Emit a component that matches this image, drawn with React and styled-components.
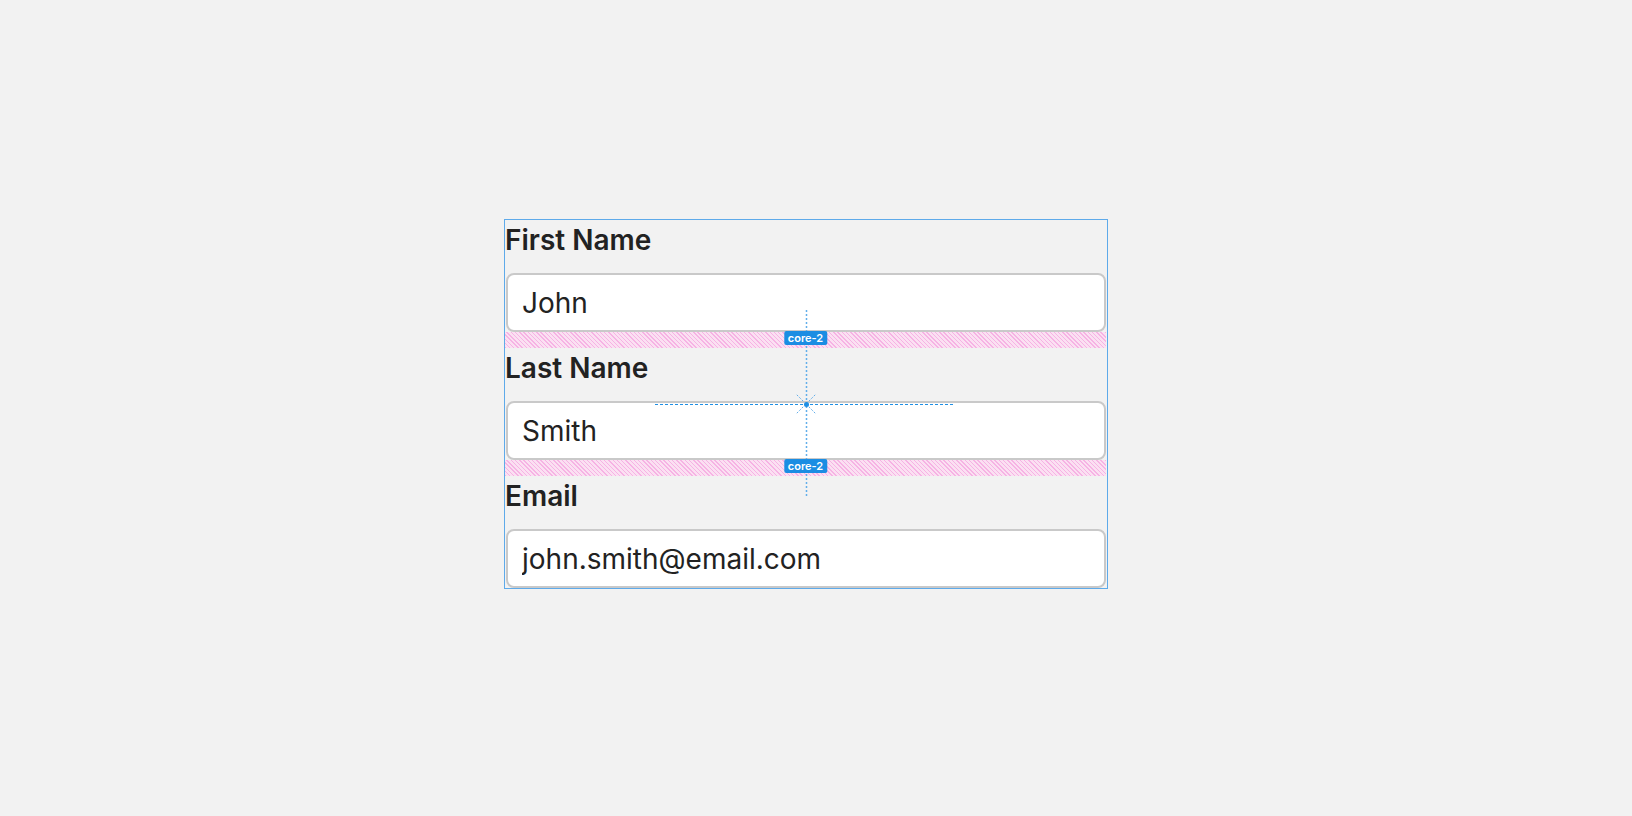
import React from 'react'
import styled, { createGlobalStyle } from 'styled-components'

const GlobalStyle = createGlobalStyle`
  html, body {
    margin: 0;
    padding: 0;
    background: #f2f2f2;
  }
  body {
    font-family: Inter, "Noto Sans", sans-serif;
    color: #222;
  }
`

const Page = styled.div`
  min-height: 100vh;
  box-sizing: border-box;
  display: flex;
  align-items: flex-start;
  padding: 219px 0 0 504px;
`

const Frame = styled.form`
  position: relative;
  width: 602px;
  box-sizing: content-box;
  border: 1px solid #5eaaea;
  display: flex;
  flex-direction: column;
`

const Field = styled.div`
  display: flex;
  flex-direction: column;
  padding: 0 1px;
`

const Label = styled.label`
  font-size: 28px;
  line-height: 40px;
  font-weight: 600;
  color: #222;
  margin: 0 0 13px -1px;
`

const Input = styled.input`
  box-sizing: border-box;
  width: 100%;
  height: 59px;
  padding: 0 14px;
  border: 2px solid #c9c9c9;
  border-radius: 8px;
  background: #fff;
  font-family: Inter, "Noto Sans", sans-serif;
  font-size: 28px;
  color: #222;
  outline: none;
`

const GapBand = styled.div`
  position: relative;
  height: 16px;
  margin: 0 1px 0 0;
  background: repeating-linear-gradient(
    45deg,
    #f6b3e4 0px,
    #f6b3e4 1px,
    #fbe0f2 1px,
    #fbe0f2 3px
  );
`

const Badge = styled.span`
  position: absolute;
  top: -1px;
  left: 50%;
  transform: translateX(-50%);
  z-index: 2;
  height: 14px;
  padding: 0 4px;
  border-radius: 2px;
  background: #1b8de3;
  color: #fff;
  font-size: 11px;
  line-height: 14px;
  font-weight: 600;
  white-space: nowrap;
`

const Guides = styled.svg`
  position: absolute;
  left: 150px;
  top: 90px;
  z-index: 1;
  pointer-events: none;
  overflow: visible;
`

const fields = [
  { label: 'First Name', value: 'John', type: 'text' },
  { label: 'Last Name', value: 'Smith', type: 'text' },
  { label: 'Email', value: 'john.smith@email.com', type: 'email' },
]

const Crosshair = () => {
  const cx = 151
  const cy = 94
  const rays = [45, 135, 225, 315].map((a) => {
    const r = (a * Math.PI) / 180
    return {
      x1: cx + Math.cos(r) * 4,
      y1: cy + Math.sin(r) * 4,
      x2: cx + Math.cos(r) * 13,
      y2: cy + Math.sin(r) * 13,
    }
  })
  return (
    <Guides width="300" height="186" viewBox="0 0 300 186">
      <line x1={cx + 0.5} y1="0" x2={cx + 0.5} y2="186" stroke="#62aeea" strokeWidth="1.5" strokeDasharray="2 2" />
      <line x1="0" y1={cy + 0.5} x2="300" y2={cy + 0.5} stroke="#1e8fe4" strokeWidth="1" strokeDasharray="3 2" />
      {rays.map((l, i) => (
        <line key={i} {...l} stroke="#62aeea" strokeWidth="1" strokeDasharray="2 1.5" />
      ))}
      <circle cx={cx + 0.5} cy={cy + 0.5} r="2.5" fill="#1e8fe4" />
    </Guides>
  )
}

export default function App() {
  return (
    <>
      <GlobalStyle />
      <Page>
        <Frame onSubmit={(e) => e.preventDefault()}>
          {fields.map((f, idx) => (
            <React.Fragment key={f.label}>
              <Field>
                <Label>{f.label}</Label>
                <Input type={f.type} defaultValue={f.value} />
              </Field>
              {idx < fields.length - 1 && (
                <GapBand>
                  <Badge>core-2</Badge>
                </GapBand>
              )}
            </React.Fragment>
          ))}
          <Crosshair />
        </Frame>
      </Page>
    </>
  )
}
